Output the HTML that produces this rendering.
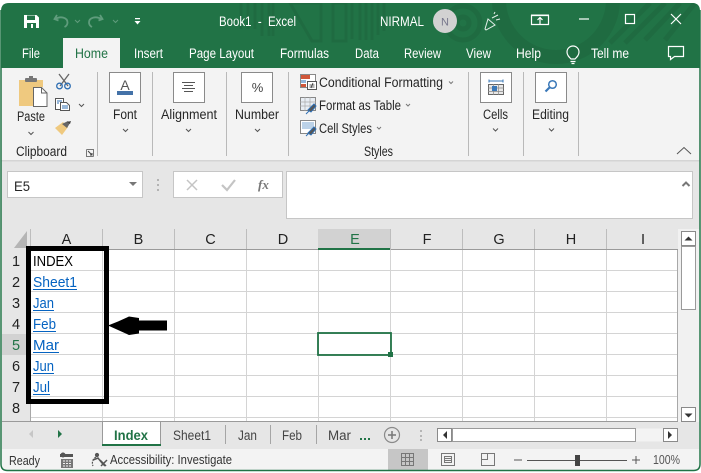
<!DOCTYPE html>
<html><head><meta charset="utf-8"><style>
html,body{margin:0;padding:0;background:#fff;width:701px;height:473px;overflow:hidden}
svg{display:block}
text{font-family:"Liberation Sans",sans-serif;font-size:13.5px;fill:#262626}
.w text{fill:#fff}
.c text{font-size:15px;fill:#000}
.l text{fill:#0563c1;font-size:14.5px}
.h text{font-size:14.5px;fill:#222;text-anchor:middle}
</style></head><body>
<svg width="701" height="473" viewBox="0 0 701 473" xmlns="http://www.w3.org/2000/svg">
<defs><clipPath id="t"><path d="M1 68V11q0-8 8-8H692q8 0 8 8V68z"/></clipPath></defs>
<rect width="701" height="473" fill="#fff"/>
<path d="M1 68V11q0-8 8-8H692q8 0 8 8V68z" fill="#217346"/>
<g clip-path="url(#t)" fill="none" stroke="#1f6b41">
<circle cx="463" cy="23" r="17" stroke-width="5"/>
<circle cx="463" cy="23" r="6" stroke-width="5"/>
<circle cx="556" cy="0" r="57" stroke-width="14"/>
<path d="M241 3V29M248 3V29M255 3V29M262 3V36M269 3V36M273 3V36" stroke-width="3"/>
<path d="M290 3l22 38h9V3zM333 3v38h13V3zM360 3v37M366 3v37M372 3v37M378 3v32M384 3v28M352 3v36" stroke-width="3"/>
<path d="M650 3L610 43M665 3L625 43M680 3L645 40M695 3L665 40" stroke-width="5"/>
</g>
<!-- QAT -->
<path d="M24 15h12.500l2.500 2.500V28H24z" fill="#fff"/>
<rect x="27" y="15.500" width="8" height="4.500" fill="#217346"/><rect x="27" y="23" width="9" height="5" fill="#217346"/><rect x="31" y="24" width="2" height="4" fill="#fff"/>
<g fill="none" stroke="#5f9c7c" stroke-width="1.800"><path d="M57 15l-2.500 4 4 1.500M54.500 19.500c6-4 13-2 13 3 0 2-1 3.500-3 4.500M100 15l2.500 4-4 1.500M102 19.500c-6-4-13-2-13 3 0 2 1 3.500 3 4.500" /></g>
<path d="M75 20l2.500 2.500L80 20M113 20l2.500 2.500L118 20" fill="none" stroke="#5f9c7c"/>
<path d="M135 18h5v1.200h-5zM134.500 21h6l-3 3.500z" fill="#fff"/>
<g class="w">
<text x="219" y="26" textLength="77" lengthAdjust="spacingAndGlyphs">Book1&#160;&#160;-&#160;&#160;Excel</text>
<text x="380" y="26" textLength="44" lengthAdjust="spacingAndGlyphs">NIRMAL</text>
<text x="22" y="58" textLength="18" lengthAdjust="spacingAndGlyphs">File</text>
<text x="134" y="58" textLength="29" lengthAdjust="spacingAndGlyphs">Insert</text>
<text x="189" y="58" textLength="65" lengthAdjust="spacingAndGlyphs">Page Layout</text>
<text x="280" y="58" textLength="49" lengthAdjust="spacingAndGlyphs">Formulas</text>
<text x="355" y="58" textLength="24" lengthAdjust="spacingAndGlyphs">Data</text>
<text x="404" y="58" textLength="37" lengthAdjust="spacingAndGlyphs">Review</text>
<text x="466" y="58" textLength="25" lengthAdjust="spacingAndGlyphs">View</text>
<text x="516" y="58" textLength="25" lengthAdjust="spacingAndGlyphs">Help</text>
<text x="591" y="58" textLength="38" lengthAdjust="spacingAndGlyphs">Tell me</text>
</g>
<circle cx="445" cy="21" r="12" fill="#d2d2d2"/>
<text x="445" y="25.500" text-anchor="middle" style="font-size:11px;fill:#77778c">N</text>
<!-- title right icons -->
<g fill="none" stroke="#e4efe9" stroke-width="1"><path d="M485 29l3-10 7 6-9 5zM492 18l6-3M496 20l4-1M494 14l1-2"/></g>
<g fill="none" stroke="#fff" stroke-width="1.200"><path d="M531.500 15.500h17v9h-17z"/><path d="M540 24v-6M537.500 20l2.500-2.500 2.500 2.500"/></g>
<rect x="531" y="14.500" width="18" height="1.500" fill="#fff"/>
<path d="M579 19h10" stroke="#fff" stroke-width="1.200"/>
<rect x="625.500" y="14.500" width="9" height="9" fill="none" stroke="#fff" stroke-width="1.200"/>
<path d="M671 14l10 10M681 14l-10 10" stroke="#fff" stroke-width="1.200"/>
<g fill="none" stroke="#fff" stroke-width="1.200"><path d="M571 59c-2-2-4-4-4-7a6 6 0 0 1 12 0c0 3-2 5-4 7zM570.500 61.500h5M571.500 63.500h3"/>
<path d="M668.500 46.500h15v10h-9l-4 3v-3h-2z"/></g>
<!-- Home tab -->
<rect x="63" y="38" width="57" height="31" fill="#f3f3f3"/>
<text x="75" y="58" textLength="33" lengthAdjust="spacingAndGlyphs" style="fill:#217346">Home</text>
<!-- Ribbon -->
<rect x="1" y="68" width="699" height="92" fill="#f3f3f3"/>
<rect x="1" y="160" width="699" height="1.500" fill="#d4d4d4"/>
<rect x="1" y="161.500" width="699" height="68" fill="#e6e6e6"/>
<g fill="#b9b9b9"><rect x="97" y="72" width="1" height="84"/><rect x="152" y="72" width="1" height="84"/><rect x="226" y="72" width="1" height="84"/><rect x="288" y="72" width="1" height="84"/><rect x="468" y="72" width="1" height="84"/><rect x="523" y="72" width="1" height="84"/><rect x="578" y="72" width="1" height="84"/></g>
<!-- Paste icon -->
<path d="M19 80h24v7H34v19H19z" fill="#efc97f"/><rect x="25" y="78" width="12" height="4" rx="1" fill="#777"/><rect x="29" y="76" width="4" height="3" fill="#777"/>
<path d="M33.500 87.500h8l5.500 5.500v13.500H33.500z" fill="#fff" stroke="#666"/>
<path d="M41.500 87.500v5.500h5.500" fill="none" stroke="#666"/>
<!-- scissors -->
<g fill="none"><path d="M59 74l9 12M69 74l-9 12" stroke="#666" stroke-width="1.300"/><circle cx="59.500" cy="86" r="2.800" stroke="#2f6fb3" stroke-width="1.300"/><circle cx="67.500" cy="86" r="2.800" stroke="#2f6fb3" stroke-width="1.300"/></g>
<!-- copy -->
<g fill="#fff" stroke="#555"><rect x="55.500" y="98.500" width="8" height="11"/><path d="M60.500 102.500h6l3 3v5h-9z"/></g>
<path d="M57 101h5M57 103h2M62 106h6M62 108h6" stroke="#2f6fb3"/>
<path d="M79 104l2.500 2.500 2.500-2.500" fill="none" stroke="#555"/>
<!-- brush -->
<path d="M55 128l8-6 5 5-6 8z" fill="#efc97f"/><path d="M62 124l6-3 2 2-3 5z" fill="#666"/><path d="M67 122l4-1-1 3z" fill="#444"/>
<path d="M28.500 132l2.500 2.500 2.500-2.500M123 129l2.500 2.500 2.500-2.500M186 129l2.500 2.500 2.500-2.500M255 129l2.500 2.500 2.500-2.500M493 128.500l2.500 2.500 2.500-2.500M549 128.500l2.500 2.500 2.500-2.500" fill="none" stroke="#555"/>
<path d="M449 81.500l2 2 2-2M406 104l2 2 2-2M377 127l2 2 2-2" fill="none" stroke="#777"/>
<text x="17" y="121" textLength="28" lengthAdjust="spacingAndGlyphs">Paste</text>
<text x="113" y="119" textLength="24" lengthAdjust="spacingAndGlyphs">Font</text>
<text x="161" y="119" textLength="56" lengthAdjust="spacingAndGlyphs">Alignment</text>
<text x="235" y="119" textLength="44" lengthAdjust="spacingAndGlyphs">Number</text>
<text x="483" y="119" textLength="25" lengthAdjust="spacingAndGlyphs">Cells</text>
<text x="532" y="119" textLength="37" lengthAdjust="spacingAndGlyphs">Editing</text>
<text x="16" y="156" textLength="51" lengthAdjust="spacingAndGlyphs">Clipboard</text>
<text x="364" y="156" textLength="29" lengthAdjust="spacingAndGlyphs">Styles</text>
<text x="319" y="87" textLength="124" lengthAdjust="spacingAndGlyphs">Conditional Formatting</text>
<text x="319" y="110" textLength="82" lengthAdjust="spacingAndGlyphs">Format as Table</text>
<text x="319" y="133" textLength="53" lengthAdjust="spacingAndGlyphs">Cell Styles</text>
<!-- dialog launcher -->
<path d="M86.500 149.500h7v7M86.500 149.500v7h7" fill="none" stroke="#777"/><path d="M88 151l4 4M92 153v2h-2" fill="none" stroke="#444"/>
<!-- collapse -->
<path d="M677 154l7-6.500 7 6.500" fill="none" stroke="#555"/>
<!-- Big buttons -->
<g fill="#fff" stroke="#8a8a8a"><rect x="109.500" y="72.500" width="31" height="30"/><rect x="173.500" y="72.500" width="31" height="30"/><rect x="241.500" y="72.500" width="31" height="30"/><rect x="480.500" y="72.500" width="31" height="30"/><rect x="535.500" y="72.500" width="31" height="30"/></g>
<text x="125" y="90" text-anchor="middle" style="font-size:14px;fill:#555">A</text>
<rect x="117" y="91" width="16" height="4" fill="#4472a8"/>
<path d="M182 82.500h13M184 85.500h9M182 88.500h13M184 91.500h9" stroke="#555"/>
<text x="257.500" y="92" text-anchor="middle" style="font-size:13px;fill:#444">%</text>
<g><path d="M489 81h14" stroke="#3a78b8"/><path d="M489 79.500v3M503 79.500v3" stroke="#3a78b8"/>
<rect x="488.500" y="84.500" width="15" height="10" fill="#e8e8e8" stroke="#666"/><path d="M493.500 84v11M498.500 84v11M488 88h16M488 91.500h16" stroke="#888" stroke-width=".7"/><rect x="492" y="86" width="5" height="5" fill="#3a78b8"/></g>
<g fill="none"><circle cx="552.500" cy="84.500" r="3.800" stroke="#3a78b8" stroke-width="1.500"/><path d="M549.500 87.500l-4 4" stroke="#3a78b8" stroke-width="2.200"/></g>
<!-- style icons -->
<g>
<rect x="300.500" y="74.500" width="15" height="13" fill="#fff" stroke="#888"/><rect x="301" y="75" width="9" height="4" fill="#d0573a"/><rect x="301" y="80" width="5" height="3" fill="#8fb4d9"/><rect x="301" y="84" width="5" height="3" fill="#d0573a"/>
<rect x="307.500" y="81.500" width="9" height="8" fill="#fff" stroke="#555"/><path d="M309.500 85h5M309.500 87h5M313 83l-2 5" stroke="#333" stroke-width=".8"/>
<rect x="300.500" y="97.500" width="15" height="13" fill="#e8edf3" stroke="#888"/><path d="M305 97v14M310 97v14M300 102h16M300 106h16" stroke="#aaa" stroke-width=".7"/><path d="M308 110l6-6 2 2-5 6zM306 114l3-3" stroke="#2f6fb3" fill="#555"/>
<rect x="300.500" y="120.500" width="15" height="13" fill="#fff" stroke="#888"/><rect x="302" y="122" width="12" height="7" fill="#bcd2e8"/><path d="M308 133l6-6 2 2-5 6zM306 136l3-3" stroke="#2f6fb3" fill="#555"/>
</g>
<!-- formula bar -->
<rect x="7.500" y="171.500" width="135" height="26" fill="#fff" stroke="#c6c6c6"/>
<text x="14" y="191" textLength="16" lengthAdjust="spacingAndGlyphs" style="font-size:14px">E5</text>
<path d="M129 182h8l-4 4z" fill="#777"/>
<g fill="#b3b3b3"><rect x="157" y="179" width="2" height="2"/><rect x="157" y="184" width="2" height="2"/><rect x="157" y="189" width="2" height="2"/></g>
<rect x="173.500" y="171.500" width="109" height="26" fill="#fff" stroke="#c6c6c6"/>
<path d="M187 180l10 10M197 180l-10 10" stroke="#c4c4c4" stroke-width="1.500"/>
<path d="M222 185l5 5 8-10" fill="none" stroke="#c4c4c4" stroke-width="2.200"/>
<text x="258" y="189" style="font-family:'Liberation Serif',serif;font-style:italic;font-weight:bold;font-size:13px;fill:#777">fx</text>
<rect x="286.500" y="171.500" width="406" height="47" fill="#fff" stroke="#c6c6c6"/>
<path d="M682.500 186l3.500-3.500 3.500 3.500" fill="none" stroke="#777" stroke-width="2"/>
<!-- grid -->
<rect x="2" y="229" width="676" height="21" fill="#e6e6e6"/>
<rect x="2" y="250" width="28" height="172" fill="#e6e6e6"/>
<rect x="30" y="250" width="648" height="172" fill="#fff"/>
<path d="M27 231v17H14z" fill="#b5b5b5"/>
<rect x="318" y="229" width="73" height="19" fill="#d2d2d2"/><rect x="318" y="248" width="73" height="2" fill="#217346"/>
<rect x="2" y="334" width="28" height="21" fill="#d2d2d2"/>
<g fill="#bdbdbd"><rect x="30" y="229" width="1" height="21"/><rect x="102" y="229" width="1" height="21"/><rect x="174" y="229" width="1" height="21"/><rect x="246" y="229" width="1" height="21"/><rect x="390" y="229" width="1" height="21"/><rect x="462" y="229" width="1" height="21"/><rect x="534" y="229" width="1" height="21"/><rect x="606" y="229" width="1" height="21"/></g>
<rect x="30" y="249" width="288" height="1" fill="#9a9a9a"/><rect x="391" y="249" width="287" height="1" fill="#9a9a9a"/>
<path d="M102.500 250v172M174.500 250v172M246.500 250v172M318.500 250v172M390.500 250v172M462.500 250v172M534.500 250v172M606.500 250v172M30 270.500h648M30 291.500h648M30 312.500h648M30 333.500h648M30 354.500h648M30 375.500h648M30 396.500h648M30 417.500h648" stroke="#d4d4d4" fill="none"/>
<path d="M30.500 250v172M677.500 250v172" stroke="#a8a8a8"/>
<g class="h">
<text x="66.500" y="244">A</text><text x="138.500" y="244">B</text><text x="210.500" y="244">C</text><text x="283" y="244">D</text><text x="355" y="244" style="fill:#217346">E</text><text x="427" y="244">F</text><text x="499" y="244">G</text><text x="571" y="244">H</text><text x="643" y="244">I</text>
<text x="16" y="266">1</text><text x="16" y="287">2</text><text x="16" y="308">3</text><text x="16" y="329">4</text><text x="16" y="350" style="fill:#217346">5</text><text x="16" y="371">6</text><text x="16" y="392">7</text><text x="16" y="413">8</text>
</g>
<g class="c"><text x="33" y="266" textLength="40" lengthAdjust="spacingAndGlyphs">INDEX</text></g>
<g class="l">
<text x="33" y="287" textLength="44" lengthAdjust="spacingAndGlyphs">Sheet1</text>
<text x="33" y="308" textLength="21" lengthAdjust="spacingAndGlyphs">Jan</text>
<text x="33" y="329" textLength="23" lengthAdjust="spacingAndGlyphs">Feb</text>
<text x="33" y="350" textLength="26" lengthAdjust="spacingAndGlyphs">Mar</text>
<text x="33" y="371" textLength="21" lengthAdjust="spacingAndGlyphs">Jun</text>
<text x="33" y="392" textLength="17" lengthAdjust="spacingAndGlyphs">Jul</text>
</g>
<g fill="#0563c1"><rect x="33" y="289" width="44" height="1"/><rect x="33" y="310" width="21" height="1"/><rect x="33" y="331" width="23" height="1"/><rect x="33" y="352" width="26" height="1"/><rect x="33" y="373" width="21" height="1"/><rect x="33" y="394" width="17" height="1"/></g>
<!-- selection -->
<rect x="318" y="333" width="73" height="22" fill="none" stroke="#217346" stroke-width="1.800"/>
<rect x="388" y="352" width="5" height="5" fill="#217346"/>
<!-- black box and arrow -->
<rect x="28.500" y="248.500" width="78" height="153" fill="none" stroke="#000" stroke-width="5"/>
<path d="M108 325.500l10-4 11-5 10 1.500v2.500h28v10h-28v3l-10 1.500-11-5z" fill="#000"/>
<!-- scrollbar -->
<rect x="678" y="229" width="21" height="193" fill="#f1f1f1"/>
<rect x="681.500" y="231.500" width="14" height="14" fill="#fff" stroke="#8a8a8a"/><path d="M684.500 240.500l4-4 4 4z" fill="#333"/>
<rect x="681.500" y="246.500" width="14" height="63" fill="#fff" stroke="#9a9a9a"/>
<rect x="681.500" y="407.500" width="14" height="14" fill="#fff" stroke="#8a8a8a"/><path d="M684.500 413.500h8l-4 4z" fill="#333"/>
<!-- sheet tabs -->
<rect x="2" y="422" width="697" height="27" fill="#e6e6e6"/>
<rect x="2" y="421" width="676" height="1" fill="#9a9a9a"/>
<path d="M33 430v8l-4-4z" fill="#c6c6c6"/><path d="M58 430v8l4-4z" fill="#217346"/>
<path d="M102.500 422v23.500h58V422" fill="#fff" stroke="#9a9a9a"/>
<rect x="102" y="444" width="59" height="2" fill="#217346"/>
<text x="114" y="440" textLength="34" lengthAdjust="spacingAndGlyphs" style="font-weight:bold;fill:#217346">Index</text>
<text x="173" y="440" textLength="38" lengthAdjust="spacingAndGlyphs" style="fill:#444">Sheet1</text>
<text x="238" y="440" textLength="19" lengthAdjust="spacingAndGlyphs" style="fill:#444">Jan</text>
<text x="282" y="440" textLength="20" lengthAdjust="spacingAndGlyphs" style="fill:#444">Feb</text>
<text x="328" y="440" textLength="23" lengthAdjust="spacingAndGlyphs" style="fill:#444">Mar</text>
<path d="M225.500 425v19M270.500 425v19M316.500 425v19" stroke="#a5a5a5"/>
<g fill="#217346"><rect x="360" y="438" width="2" height="2"/><rect x="364" y="438" width="2" height="2"/><rect x="368" y="438" width="2" height="2"/></g>
<circle cx="392" cy="435" r="7.500" fill="none" stroke="#8a8a8a" stroke-width="1.200"/><path d="M392 431v8M388 435h8" stroke="#777" stroke-width="1.500"/>
<g fill="#b5b5b5"><rect x="420" y="430" width="2" height="2"/><rect x="420" y="435" width="2" height="2"/><rect x="420" y="439" width="2" height="2"/></g>
<rect x="437.500" y="428.500" width="240" height="13" fill="#f3f3f3"/>
<rect x="437.500" y="428.500" width="14" height="13" fill="#fff" stroke="#8a8a8a"/><path d="M447 431v8l-4-4z" fill="#333"/>
<rect x="452.500" y="428.500" width="183" height="13" fill="#fff" stroke="#9a9a9a"/>
<rect x="663.500" y="428.500" width="14" height="13" fill="#fff" stroke="#8a8a8a"/><path d="M668 431v8l4-4z" fill="#333"/>
<!-- status -->
<rect x="2" y="449" width="697" height="21" fill="#f3f3f3"/>
<rect x="388" y="449" width="40" height="21" fill="#c6c6c6"/>
<text x="9" y="465" textLength="31" lengthAdjust="spacingAndGlyphs" style="font-size:12.5px;fill:#333">Ready</text>
<text x="110" y="464" textLength="122" lengthAdjust="spacingAndGlyphs" style="font-size:12.5px;fill:#333">Accessibility: Investigate</text>
<text x="653" y="464" textLength="27" lengthAdjust="spacingAndGlyphs" style="font-size:12.5px;fill:#555">100%</text>
<g fill="#555"><circle cx="63" cy="455" r="2.500"/><rect x="60" y="454" width="13" height="3"/><path d="M61 459h12v9H61z" fill="#777"/></g>
<path d="M63 461h9M63 463.500h9M63 466h9" stroke="#f3f3f3" stroke-dasharray="2 1"/>
<g fill="none" stroke="#555" stroke-width="1.200"><path d="M96 457a7 7 0 0 0 -3 9" stroke-dasharray="2 1"/><circle cx="97" cy="455" r="1.500" fill="#555"/><path d="M93 460l5-2 4 5 3 3M101 466l6-6M100 460l6 6" stroke-width="1.500"/></g>
<g fill="none" stroke="#777"><rect x="401.500" y="453.500" width="12" height="12"/><path d="M405.500 453v13M409.500 453v13M401 457.500h13M401 461.500h13"/>
<rect x="441.500" y="453.500" width="13" height="12"/><path d="M444.500 456.500h7v6h-7zM445 458.500h6M445 460.500h6"/>
<rect x="481.500" y="453.500" width="13" height="12"/><path d="M481.500 459.500h6V453.500"/></g>
<path d="M514 460h8M527 460.500h100M632 460h8M636 456v8" stroke="#555"/>
<rect x="575" y="455" width="5" height="11" fill="#444"/>
<!-- frame -->
<path d="M1 10v454q0 6.500 6.500 6.500H693.500q6.500 0 6.500-6.500V10" fill="none" stroke="#217346" stroke-width="1.500"/>
</svg>
</body></html>
